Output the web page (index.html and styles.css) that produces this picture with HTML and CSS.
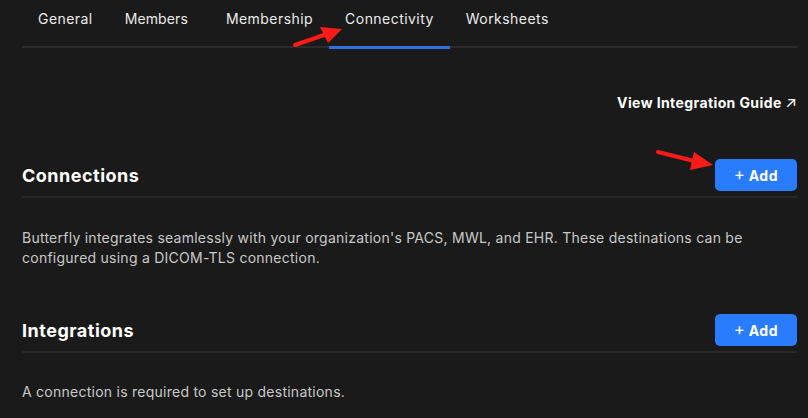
FILE: index.html
```html
<!DOCTYPE html>
<html lang="en">
<head>
<meta charset="utf-8">
<title>Connectivity</title>
<link rel="stylesheet" href="styles.css">
</head>
<body>
<div class="page">
  <nav class="tabs">
    <a class="tab">General</a>
    <a class="tab tab-wide">Members</a>
    <a class="tab">Membership</a>
    <a class="tab active">Connectivity</a>
    <a class="tab">Worksheets</a>
  </nav>

  <div class="guide-row">
    <a class="guide">View Integration Guide <span class="ext">&#8599;</span></a>
  </div>

  <section class="section first">
    <header class="section-head">
      <h2>Connections</h2>
      <button class="add"><span class="plus">+</span> Add</button>
    </header>
    <p class="desc">Butterfly integrates seamlessly with your organization's PACS, MWL, and EHR. These destinations can be configured using a DICOM-TLS connection.</p>
  </section>

  <section class="section second">
    <header class="section-head">
      <h2>Integrations</h2>
      <button class="add"><span class="plus">+</span> Add</button>
    </header>
    <p class="desc">A connection is required to set up destinations.</p>
  </section>

  <svg class="annot" width="808" height="418" viewBox="0 0 808 418">
    <line x1="295" y1="45" x2="324" y2="35" stroke="#ff1a1a" stroke-width="4" stroke-linecap="round"/>
    <polygon points="342,29 320,27 328,43" fill="#ff1a1a"/>
    <line x1="658" y1="152" x2="694" y2="161" stroke="#ff1a1a" stroke-width="4" stroke-linecap="round"/>
    <polygon points="713,165 694,152 690,170" fill="#ff1a1a"/>
  </svg>
</div>
</body>
</html>
```

FILE: styles.css
```css
* { box-sizing: border-box; }
html, body { margin: 0; padding: 0; }
body {
  background: #1a1a1a;
  color: #e6e6e6;
  font-family: "Inter", "Liberation Sans", sans-serif;
  width: 808px;
  height: 418px;
  overflow: hidden;
}
.page {
  position: relative;
  padding: 0 11px 0 22px;
}
.tabs {
  display: flex;
  border-bottom: 2px solid #2c2c2c;
  height: 48px;
}
.tab {
  display: block;
  padding: 9px 16px 0;
  line-height: 20px;
  font-size: 14px;
  letter-spacing: 0.45px;
  color: #ececec;
  white-space: nowrap;
  position: relative;
}
.tab-wide { letter-spacing: 0.1px; padding-right: 22px; }
.tab.active::after {
  content: "";
  position: absolute;
  left: 0; right: 0;
  bottom: -3px;
  height: 3px;
  background: #2f6fe0;
}
.guide-row {
  display: flex;
  justify-content: flex-end;
  padding-top: 45px;
  height: 65px;
}
.guide {
  font-size: 14px;
  font-weight: 700;
  line-height: 20px;
  letter-spacing: 0.4px;
  color: #ffffff;
}
.ext { font-weight: 400; font-size: 15px; letter-spacing: 0; }
.section-head {
  display: flex;
  justify-content: space-between;
  align-items: center;
  border-bottom: 2px solid #282828;
  padding-bottom: 5px;
}
.section.first { padding-top: 46px; }
.section.second { padding-top: 46px; }
h2 {
  margin: 0;
  font-size: 18px;
  font-weight: 700;
  color: #ffffff;
  letter-spacing: 0.5px;
}
.add {
  width: 82px;
  height: 32px;
  border: none;
  border-radius: 5px;
  background: #2a7cff;
  color: #ffffff;
  font-family: inherit;
  font-size: 14px;
  font-weight: 700;
  letter-spacing: 0.6px;
  display: flex;
  align-items: center;
  justify-content: center;
  gap: 3px;
  padding: 0;
}
.plus { font-weight: 400; font-size: 17px; margin-top: -2px; }
.desc {
  margin: 0;
  padding-top: 30px;
  font-size: 14px;
  line-height: 20px;
  letter-spacing: 0.25px;
  color: #c9c9c9;
}
.second .desc { padding-top: 29px; }
.annot {
  position: absolute;
  left: 0;
  top: 0;
  pointer-events: none;
}
```
